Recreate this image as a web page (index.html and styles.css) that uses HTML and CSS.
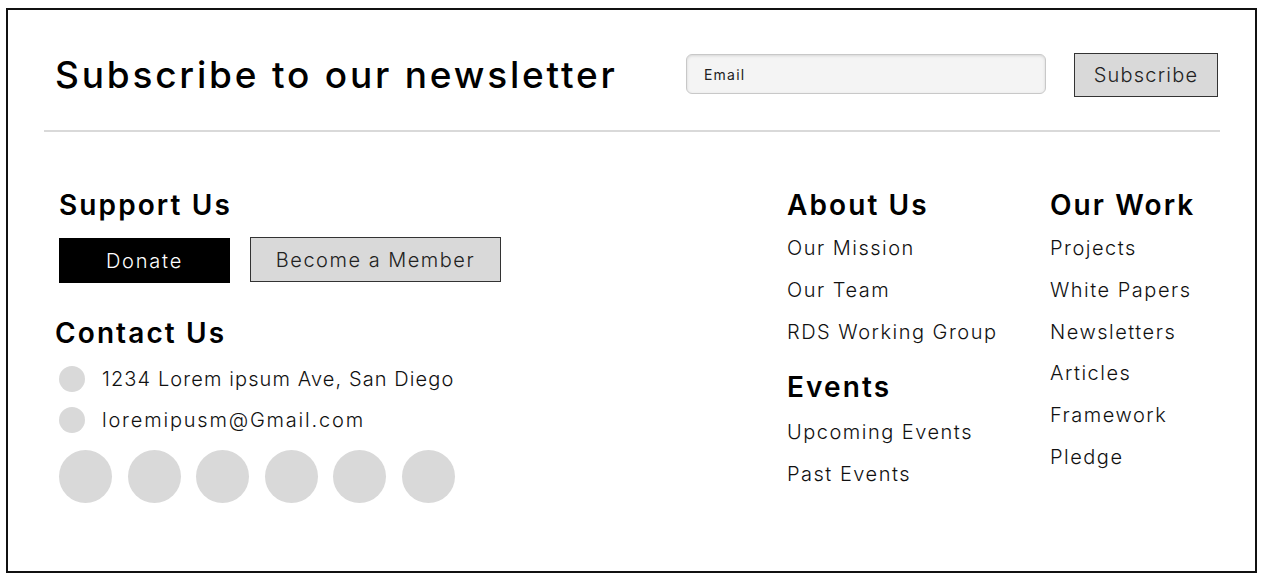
FILE: index.html
```html
<!DOCTYPE html>
<html lang="en">
<head>
<meta charset="utf-8">
<title>Footer</title>
<link rel="stylesheet" href="styles.css">
</head>
<body>
<footer class="footer">
  <section class="top">
    <h1 class="top-title">Subscribe to our newsletter</h1>
    <div class="email-field"><span class="email-placeholder">Email</span></div>
    <button class="btn btn-grey btn-subscribe">Subscribe</button>
  </section>
  <section class="main">
    <div class="col-left">
      <h2 class="heading">Support Us</h2>
      <div class="btn-row">
        <button class="btn btn-black btn-donate">Donate</button>
        <button class="btn btn-grey btn-member">Become a Member</button>
      </div>
      <h2 class="heading heading-contact">Contact Us</h2>
      <div class="contact-row contact-first"><span class="dot"></span><span class="contact-text contact-address">1234 Lorem ipsum Ave, San Diego</span></div>
      <div class="contact-row"><span class="dot"></span><span class="contact-text contact-mail">loremipusm@Gmail.com</span></div>
      <div class="socials">
        <span class="social"></span><span class="social"></span><span class="social"></span><span class="social"></span><span class="social"></span><span class="social"></span>
      </div>
    </div>
    <div class="col-about">
      <h2 class="heading">About Us</h2>
      <ul class="links">
        <li>Our Mission</li>
        <li>Our Team</li>
        <li>RDS Working Group</li>
      </ul>
      <h2 class="heading heading-events">Events</h2>
      <ul class="links links-events">
        <li>Upcoming Events</li>
        <li>Past Events</li>
      </ul>
    </div>
    <div class="col-work">
      <h2 class="heading">Our Work</h2>
      <ul class="links links-work">
        <li>Projects</li>
        <li>White Papers</li>
        <li>Newsletters</li>
        <li>Articles</li>
        <li>Framework</li>
        <li>Pledge</li>
      </ul>
    </div>
  </section>
</footer>
</body>
</html>
```
FILE: styles.css
```css
* { box-sizing: border-box; }
html, body { margin: 0; padding: 0; background: #fff; }
body {
  font-family: "Inter", "Liberation Sans", sans-serif;
  color: #111;
}
.footer {
  margin: 8px 0 0 6px;
  width: 1251px;
  height: 565px;
  border: 2px solid #111;
}
.top {
  display: flex;
  align-items: center;
  height: 122px;
  margin: 0 35px 0 36px;
  padding-top: 43px;
  padding-bottom: 33px;
  border-bottom: 2px solid #d9d9d9;
}
.top-title {
  flex: 1;
  margin: 0 0 0 11px;
  font-size: 37px;
  font-weight: 500;
  letter-spacing: 2.8px;
  line-height: 44px;
  color: #000;
}
.email-field {
  width: 360px;
  height: 40px;
  margin-top: -2px;
  border: 1px solid #c8c8c8;
  border-radius: 6px;
  background: #f4f4f4;
  box-shadow: inset 0 1px 3px rgba(0,0,0,0.12);
  display: flex;
  align-items: center;
  padding-left: 17px;
}
.email-placeholder { font-size: 14px; color: #222; letter-spacing: 1.2px; }
.btn {
  font-family: inherit;
  font-size: 20px;
  font-weight: 300;
  letter-spacing: 1.5px;
  color: #222;
  padding: 0;
  margin: 0;
  cursor: pointer;
}
.btn-grey { background: #d9d9d9; border: 1px solid #333; }
.btn-black { background: #000; border: 1px solid #000; color: #fff; letter-spacing: 1.8px; }
.btn-subscribe { width: 144px; height: 44px; margin: 0 2px 0 28px; letter-spacing: 1.2px; }
.main {
  display: flex;
  padding: 56px 0 0 51px;
}
.col-left { flex: 1; }
.col-about { width: 263px; }
.col-work { width: 205px; }
.heading {
  margin: 0;
  font-size: 28px;
  font-weight: 600;
  line-height: 34px;
  letter-spacing: 2.1px;
  color: #000;
}
.btn-row { display: flex; gap: 20px; margin-top: 15px; align-items: flex-start; }
.btn-donate { width: 171px; height: 45px; margin-top: 1px; }
.btn-member { width: 251px; height: 45px; }
.heading-contact { margin: 33px 0 0 -4px; }
.contact-row {
  display: flex;
  align-items: center;
  height: 41px;
}
.contact-first { margin-top: 8px; }
.dot { width: 26px; height: 26px; border-radius: 50%; background: #d9d9d9; margin-right: 17px; }
.contact-text { font-size: 20px; font-weight: 300; letter-spacing: 1.4px; }
.contact-address { letter-spacing: 1.1px; }
.contact-mail { letter-spacing: 1.8px; }
.socials { display: flex; gap: 15.5px; margin-top: 10px; }
.social { width: 53px; height: 53px; border-radius: 50%; background: #d9d9d9; }
.links { list-style: none; margin: 5px 0 0; padding: 0; }
.links li { font-size: 20px; font-weight: 300; line-height: 42px; letter-spacing: 1.5px; }
.links-work { margin-top: 6px; }
.links-work li { line-height: 41.8px; }
.heading-events { margin-top: 17px; }
.links-events { margin-top: 7px; }
```
